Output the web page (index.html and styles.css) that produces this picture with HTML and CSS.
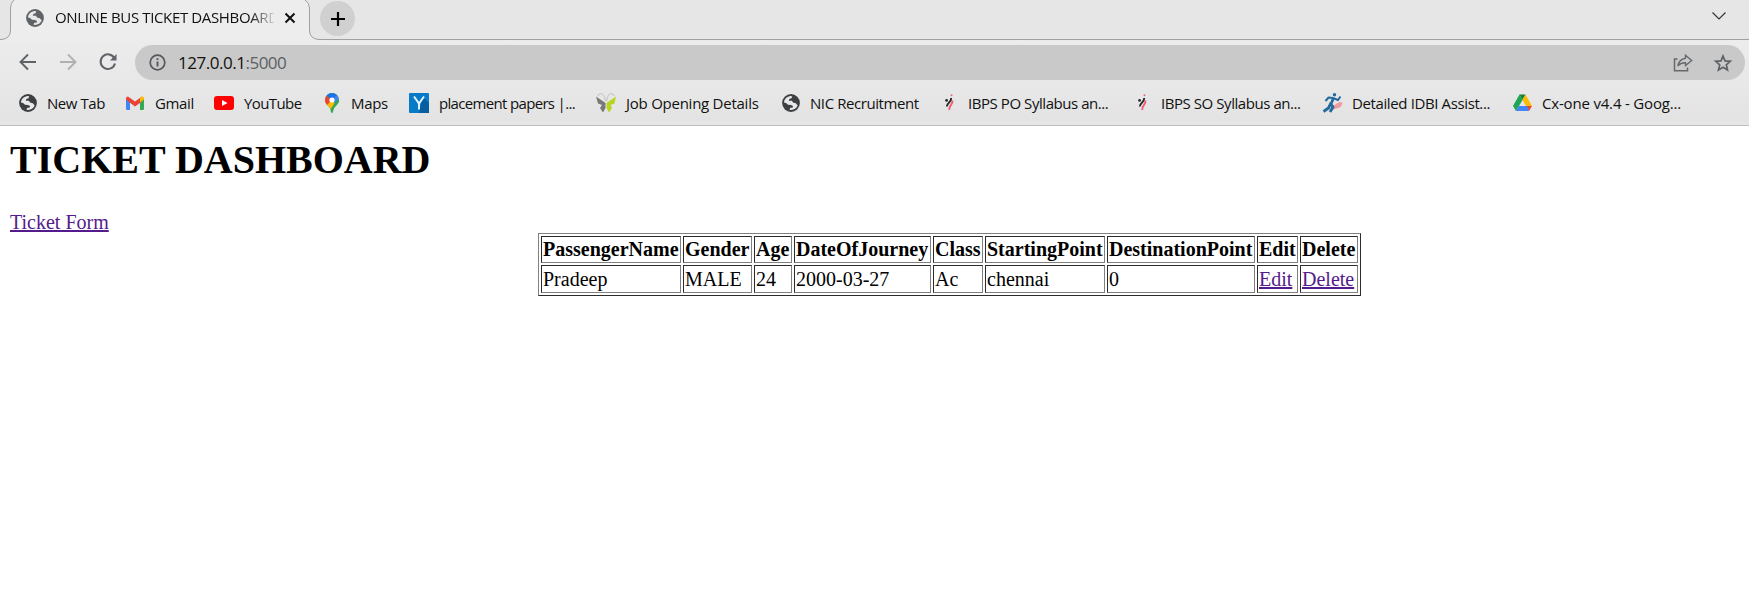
FILE: index.html
```html
<!DOCTYPE html>
<html lang="en">
<head>
<meta charset="utf-8">
<title>ONLINE BUS TICKET DASHBOARD</title>
<link rel="stylesheet" href="styles.css">
</head>
<body>
<svg class="defs" width="0" height="0">
  <symbol id="globe" viewBox="0 0 18 18">
    <circle cx="9" cy="9" r="8.9" fill="currentColor"/>
    <path d="M2 8.500C2.300 5 5 2.300 8.800 2L10.300 2.600 9.500 4.300 7.300 5 6.800 6.800H10L11 8.600 13.800 9.300 15.700 11.500C14.500 14 12.300 15.900 9 16L7.500 15.700 8.300 13.800H10.500L11 12 9 11 6 10.800 4 9Z" fill="#e8e8e8"/>
  </symbol>
  <symbol id="ibps" viewBox="0 0 20 20">
    <circle cx="7.600" cy="7.400" r="1.400" fill="#24282b"/>
    <path d="M12.200 5C12.500 9.500 8 9.500 7.800 13.500" stroke="#24282b" stroke-width="1.900" fill="none"/>
    <path d="M13.500 7.500C14 12 9.500 12.500 10.300 17" stroke="#ee5e72" stroke-width="1.900" fill="none"/>
    <circle cx="12.500" cy="2.200" r="1" fill="#f06a72"/>
  </symbol>
</svg>

<header class="browser">
  <div class="tabstrip">
    <svg class="tab-shape" width="322" height="41" viewBox="0 0 322 41">
      <path d="M0 41V39.500H1Q10.500 39 10.500 30V8Q10.500 3 14 0H305Q309.500 3 309.500 8V30Q309.500 39 319 39.500H322V41Z" fill="#ededed"/>
      <path d="M0 39.500H1Q10.500 39 10.500 30V8Q10.500 3 14 0M305 0Q309.500 3 309.500 8V30Q309.500 39 319 39.500H322" fill="none" stroke="#a0a0a0"/>
    </svg>
    <div class="tab">
      <svg class="tab-icon" width="18" height="18"><use href="#globe"/></svg>
      <span class="tab-title">ONLINE BUS TICKET DASHBOARD</span>
      <svg width="12" height="12" viewBox="0 0 12 12"><path d="M1.500 1.500l9 9M10.500 1.500l-9 9" stroke="#111" stroke-width="2"/></svg>
    </div>
    <div class="new-tab"><svg width="16" height="16" viewBox="0 0 16 16"><path d="M8 1v14M1 8h14" stroke="#000" stroke-width="2.200"/></svg></div>
    <svg class="chevron" width="16" height="10" viewBox="0 0 16 10"><path d="M1.500 1.500L8 8l6.500-6.500" stroke="#333" stroke-width="1.200" fill="none"/></svg>
  </div>
  <div class="toolbar">
    <svg width="18" height="18" viewBox="0 0 18 18"><path d="M17 9H2M9 1.500L1.500 9 9 16.500" stroke="#5f6368" stroke-width="1.900" fill="none"/></svg>
    <svg width="18" height="18" viewBox="0 0 18 18"><path d="M1 9h15M9 1.500L16.500 9 9 16.500" stroke="#aeb0b2" stroke-width="1.900" fill="none"/></svg>
    <svg width="18" height="18" viewBox="0 0 18 18"><path d="M15.500 5.500A7.300 7.300 0 1 0 16 10.500" stroke="#5f6368" stroke-width="2" fill="none"/><path d="M17.500 1v6.500H11z" fill="#5f6368"/></svg>
    <div class="omnibox">
      <svg width="17" height="17" viewBox="0 0 17 17"><circle cx="8.500" cy="8.500" r="7.300" fill="none" stroke="#55585c" stroke-width="1.700"/><path d="M8.500 7.500v5M8.500 4.200v1.900" stroke="#55585c" stroke-width="1.900"/></svg>
      <span class="url">127.0.0.1<span class="port">:5000</span></span>
      <svg class="share" width="20" height="18" viewBox="0 0 20 18"><path d="M4.500 5H1.500V16.800H14.500V13.500" stroke="#66696c" stroke-width="1.500" fill="none"/><path d="M12.500 1.200L18.700 6.500l-6.200 5V8.700C9 8.600 6.700 9.700 4.800 12c.8-4 3.200-7.100 7.700-7.800z" stroke="#66696c" stroke-width="1.400" fill="none"/></svg>
      <svg width="18" height="18" viewBox="0 0 18 18"><path d="M9 2l2 4.900 5.300.4-4 3.500 1.200 5.200L9 13.200 4.500 16l1.200-5.200-4-3.500L7 6.900z" stroke="#5f6266" stroke-width="1.700" fill="none"/></svg>
    </div>
  </div>
  <nav class="bookmarks">
    <div class="bm"><svg class="dark" viewBox="-1 -1 20 20"><use href="#globe" width="18" height="18"/></svg><span class="t1">New Tab</span></div>
    <div class="bm"><svg viewBox="0 0 20 20"><path d="M0 5l4 3v9H1.300Q0 17 0 15.700z" fill="#4285f4"/><path d="M14 8l4-3v10.700Q18 17 16.700 17H14z" fill="#34a853"/><path d="M0 6.500V5.500Q0 3.500 2 3.500L9 8.500l7-5V8.500L9 13.500 4 9.700z" fill="#ea4335"/><path d="M14 5l1.500-1.200Q18 2.800 18 5.500v1l-4 3z" fill="#fbbc04"/></svg><span class="t2">Gmail</span></div>
    <div class="bm"><svg viewBox="0 0 20 20"><rect x="-1" y="3" width="20" height="14" rx="3" fill="#f00"/><path d="M7 7l5.500 3L7 13z" fill="#fff"/></svg><span class="t3">YouTube</span></div>
    <div class="bm"><svg class="pin" viewBox="0 0 20 20"><clipPath id="pin"><path d="M9 0a7 7 0 0 0-7 7c0 5 6 6 6 12q1 1.500 2 0c0-6 6-7 6-12a7 7 0 0 0-7-7z"/></clipPath><g clip-path="url(#pin)"><path d="M0-1h20v22H0z" fill="#34a853"/><path d="M0 12L15 0h5v5L5 18z" fill="#fbbc04"/><path d="M9 7L15 0h5v6l-7 6z" fill="#4285f4"/><path d="M9 7L3 13H0V2z" fill="#fbbc04"/><path d="M0 0l9 7-5 5H0z" fill="#ea4335"/><path d="M3 2l6 5 7-7H4z" fill="#1a73e8"/><path d="M12.500 8.500L18 5v16H5z" fill="#34a853"/></g><circle cx="9" cy="7" r="2.600" fill="#fff"/></svg><span class="t4">Maps</span></div>
    <div class="bm"><svg viewBox="0 0 20 20"><rect x="-1" width="20" height="20" rx="1" fill="#087bc8"/><path d="M12.500 4L19 10v10H9z" fill="#075f9f"/><path d="M4 3.500L9 10.500 14 3.500M9 10v6.500" fill="none" stroke="#e9f5ff" stroke-width="1.900"/></svg><span class="t5">placement papers |...</span></div>
    <div class="bm"><svg viewBox="0 0 20 20"><path d="M-1 3.500L8.500 10v5L6 19.500 3 15l2-3-4-1.500z" fill="#797979"/><path d="M19 3.500L9.500 10v5l2.500 4.500 3-4.500-1.500-3 4-1.500z" fill="#b5d51f"/><path d="M8.500 8Q7-.5 3 .8Q-.5 2 1.500 3M9.500 8Q11-.5 15 .8Q18.500 2 16.500 3" stroke="#c2c2c2" fill="none"/></svg><span class="t6">Job Opening Details</span></div>
    <div class="bm"><svg class="dark" viewBox="-1 -1 20 20"><use href="#globe" width="18" height="18"/></svg><span class="t7">NIC Recruitment</span></div>
    <div class="bm"><svg><use href="#ibps" width="20" height="20"/></svg><span class="t8">IBPS PO Syllabus an...</span></div>
    <div class="bm"><svg><use href="#ibps" width="20" height="20"/></svg><span class="t9">IBPS SO Syllabus an...</span></div>
    <div class="bm"><svg viewBox="0 0 20 20"><path d="M7 19c0-6 4-6 6-8 2-1.500 3-2 6.500-1.500-1 5-3.500 5.500-6 6-3 .5-4 1.500-6.500 3.500z" fill="#ef9a9e"/><circle cx="11.500" cy="1.700" r="1.700" fill="#24699b"/><path d="M2.500 8l3-3.500L10 5l5 2 2.500-3.500" fill="none" stroke="#24699b" stroke-width="2"/><path d="M10.500 5L8 11l2 3-3 5M8 10l-2.500 5-5 3.500" fill="none" stroke="#24699b" stroke-width="2.800"/></svg><span class="t10">Detailed IDBI Assist...</span></div>
    <div class="bm"><svg viewBox="0 0 20 20"><path d="M6.500 1.500L0 13l3 5L9.500 7z" fill="#20a455"/><path d="M6.500 1.500h6L9.500 7z" fill="#188038"/><path d="M12.500 1.500L19 13h-6L9.500 7z" fill="#fbbc04"/><path d="M6 13h7v5H3z" fill="#4285f4"/><path d="M13 13h6l-3 5z" fill="#ea4335"/><path d="M3 18l3-5h8l2 5z" fill="#4285f4"/></svg><span class="t11">Cx-one v4.4 - Goog...</span></div>
  </nav>
</header>

<main class="page">
  <h1>TICKET DASHBOARD</h1>
  <a href="#">Ticket Form</a>
  <table>
    <colgroup><col class="c-name"><col class="c-gender"><col class="c-age"><col class="c-date"><col class="c-class"><col class="c-start"><col class="c-dest"><col class="c-edit"><col class="c-delete"></colgroup>
    <tr><th>PassengerName</th><th>Gender</th><th>Age</th><th>DateOfJourney</th><th>Class</th><th>StartingPoint</th><th>DestinationPoint</th><th>Edit</th><th>Delete</th></tr>
    <tr><td>Pradeep</td><td>MALE</td><td>24</td><td>2000-03-27</td><td>Ac</td><td>chennai</td><td>0</td><td><a href="#">Edit</a></td><td><a href="#">Delete</a></td></tr>
  </table>
</main>
</body>
</html>
```

FILE: styles.css
```css
* { box-sizing: border-box; }
body { margin: 0; background: #fff; }
svg { display: block; flex: none; overflow: visible; }
.defs { position: absolute; }

.browser { height: 126px; background: #e6e6e6; border-bottom: 1px solid #bebebe; font-family: "Open Sans", "Noto Sans", sans-serif; color: #111; }
.tabstrip { position: relative; display: flex; align-items: flex-start; height: 40px; border-bottom: 1px solid #a0a0a0; }
.tab-shape { position: absolute; left: 0; top: 0; }
.tab { position: relative; display: flex; align-items: center; width: 320px; height: 36px; padding-left: 26px; }
.tab-icon { color: #5f6368; margin-right: 11px; }
.tab-title { width: 219px; margin-right: 10px; overflow: hidden; white-space: nowrap; font-size: 15px; line-height: 34px; height: 36px; letter-spacing: -0.36px; -webkit-mask-image: linear-gradient(90deg, #000 195px, transparent 222px); mask-image: linear-gradient(90deg, #000 195px, transparent 222px); }
.new-tab { display: flex; align-items: center; justify-content: center; width: 35px; height: 35px; margin-top: 1px; border-radius: 50%; background: #d0d0d0; }
.chevron { margin: 11px 22px 0 auto; }

.toolbar { display: flex; align-items: center; gap: 22px; height: 44px; padding: 0 4px 0 19px; background: linear-gradient(#ececec, #e8e8e8); }
.omnibox { display: flex; align-items: center; flex: 1; height: 35px; margin: 1px 0 0 -4px; padding: 0 13px 0 14px; border-radius: 18px; background: #c9c9c9; }
.url { margin-left: 12px; font-size: 17px; letter-spacing: -0.48px; }
.port { color: #5c5f63; }
.share { margin: 0 21px 0 auto; }

.bookmarks { display: grid; grid-template-columns: 108px 89px 107px 88px 187px 184px 158px 193px 191px 190px 200px; align-items: center; height: 37px; padding-left: 18px; font-size: 15px; background: linear-gradient(#e8e8e8, #e3e3e3); }
.bm { display: flex; align-items: center; gap: 9px; min-width: 0; white-space: nowrap; }
.bm svg { width: 20px; height: 20px; }
.bm .pin { margin: 0 -1px 0 1px; }
.dark { color: #3c4043; }
.t1 { letter-spacing: -0.45px; }
.t2 { letter-spacing: -0.35px; }
.t3 { letter-spacing: -0.6px; }
.t4 { letter-spacing: -0.3px; }
.t5 { letter-spacing: -0.67px; }
.t6 { letter-spacing: -0.25px; }
.t7 { letter-spacing: -0.42px; }
.t8, .t9 { letter-spacing: -0.44px; }
.t10 { letter-spacing: -0.38px; }
.t11 { letter-spacing: -0.18px; }

.page { padding: 11px 10px 0; font-family: "Liberation Serif", "Times New Roman", serif; font-size: 20px; line-height: 23px; color: #000; }
h1 { margin: 0 0 27px; font-size: 40px; line-height: 46px; }
.page > a { display: block; width: max-content; padding-top: 1px; margin-bottom: -1px; }
a { color: #551a8b; }
table { width: 823px; margin: 0 0 0 528px; table-layout: fixed; border: 1px solid; border-color: #808080 #2c2c2c #2c2c2c #808080; border-spacing: 2px; }
th, td { height: 27px; padding: 1px; border: 1px solid; border-color: #2c2c2c #808080 #808080 #2c2c2c; text-align: left; white-space: nowrap; }
td { height: 28px; padding-top: 2px; }
.c-name { width: 140px; }
.c-gender { width: 69px; }
.c-age { width: 38px; }
.c-date { width: 137px; }
.c-class { width: 50px; }
.c-start { width: 120px; }
.c-dest { width: 148px; }
.c-edit { width: 41px; }
.c-delete { width: 58px; }
```
